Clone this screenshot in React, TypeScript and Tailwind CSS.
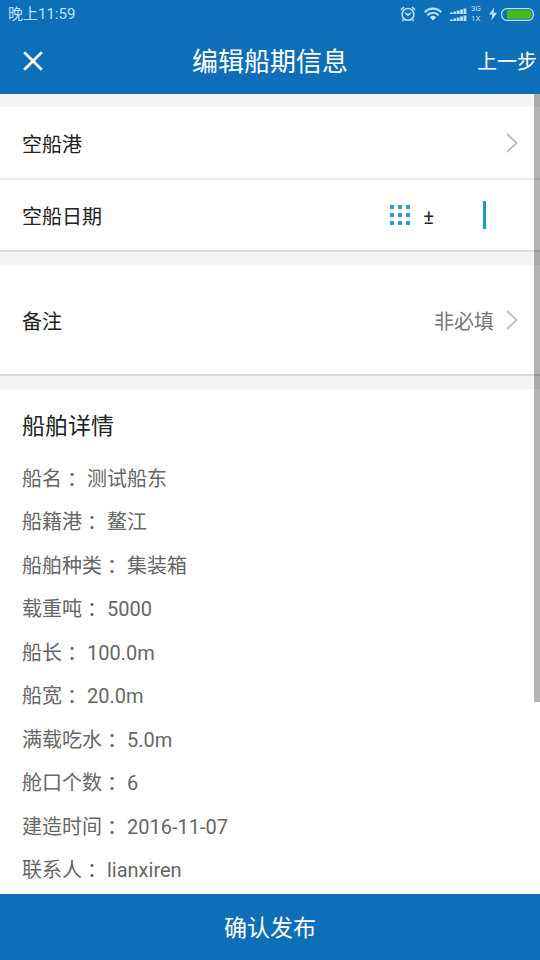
// Edit screen for a ship schedule: port, empty date, remark and ship details.

const SHIP_DETAILS = [
  { label: "船名", value: "测试船东" },
  { label: "船籍港", value: "鳌江" },
  { label: "船舶种类", value: "集装箱" },
  { label: "载重吨", value: "5000" },
  { label: "船长", value: "100.0m" },
  { label: "船宽", value: "20.0m" },
  { label: "满载吃水", value: "5.0m" },
  { label: "舱口个数", value: "6" },
  { label: "建造时间", value: "2016-11-07" },
  { label: "联系人", value: "lianxiren" },
];

export default function App() {
  return (
    <div
      lang="zh-CN"
      className="flex min-h-screen flex-col bg-[#f4f4f4] font-['Roboto','Noto_Sans_CJK_SC',sans-serif] text-xl text-[#222222]"
    >
      <header className="bg-[#0f6eb8] text-white">
        <StatusBar />
        <div className="grid h-[66px] grid-cols-[1fr_auto_1fr] items-center px-[3px]">
          <button type="button" aria-label="关闭" className="justify-self-start py-1 pr-1 pl-5">
            <svg viewBox="0 0 20 20" className="size-5" fill="none" stroke="currentColor" strokeWidth="2.7">
              <path d="M1.2 1.2 18.8 18.8M18.8 1.2 1.2 18.8" />
            </svg>
          </button>
          <h1 className="pt-0.5 text-[26px] leading-8">编辑船期信息</h1>
          <button type="button" className="justify-self-end pt-0.5">
            上一步
          </button>
        </div>
      </header>

      <main className="relative flex flex-1 flex-col gap-[13px] pt-[13px]">
        <section className="border-b-2 border-[#dedede] bg-white">
          <button
            type="button"
            className="flex h-[73px] w-full items-center justify-between border-b-2 border-[#e8e8e8] px-[22px] text-left"
          >
            <span className="pt-1">空船港</span>
            <Chevron />
          </button>
          <div className="flex h-[70px] items-center pr-[54px] pl-[22px]">
            <label htmlFor="empty-date" className="flex-1 pt-1">
              空船日期
            </label>
            <GridIcon />
            <span className="mx-3 pt-1">±</span>
            <input
              id="empty-date"
              type="text"
              inputMode="numeric"
              className="h-7 w-10 border-r-[3px] border-[#1c9aca] bg-transparent pr-1 text-right outline-none"
            />
          </div>
        </section>

        <button
          type="button"
          className="flex h-[111px] w-full items-center border-b-2 border-[#d8d8d8] bg-white px-[22px] text-left"
        >
          <span className="flex-1 pt-1">备注</span>
          <span className="mr-3 pt-1 text-[#757575]">非必填</span>
          <Chevron />
        </button>

        <section className="flex flex-1 flex-col bg-white px-[22px] pt-5 pb-2">
          <h2 className="pt-0.5 text-[23px] leading-8">船舶详情</h2>
          <ul className="mt-5 flex flex-1 flex-col justify-between gap-2 text-[#666666]">
            {SHIP_DETAILS.map((item) => (
              <li key={item.label} className="leading-8">
                {item.label} ：{item.value}
              </li>
            ))}
          </ul>
        </section>

        {/* Scroll position */}
        <div className="absolute top-0 right-0 h-[76%] w-[6px] bg-black/30" />
      </main>

      <footer>
        <button type="button" className="block h-[66px] w-full bg-[#0f6eb8] pt-1 text-[23px] text-white">
          确认发布
        </button>
      </footer>
    </div>
  );
}

function StatusBar() {
  return (
    <div className="flex h-7 items-center justify-between pr-[6px] pl-2 text-[15px] text-[#b9e2fb]">
      <span>晚上11:59</span>
      <div className="flex items-center">
        {/* Alarm */}
        <svg viewBox="0 0 16 16" className="mr-2 size-4" fill="none" stroke="currentColor" strokeWidth="1.6">
          <circle cx="8" cy="8.4" r="5.9" />
          <path d="M5.2 6.8 8 9.2l2.8-2.4M1 3.8 4 1.2M15 3.8 12 1.2M3.6 13.2 2.4 15M12.4 13.2l1.2 1.8" />
        </svg>
        {/* Wi-Fi */}
        <svg viewBox="0 0 18 14" className="mr-2 h-[14px] w-[18px]" fill="none" stroke="currentColor" strokeWidth="2.1">
          <path d="M0.8 5.2C5.2 0.4 12.8 0.4 17.2 5.2M3.4 8.2C6.4 4.9 11.6 4.9 14.6 8.2" />
          <path d="M5.8 10.2c1.9-1.8 4.5-1.8 6.4 0L9 13.6z" fill="currentColor" stroke="none" />
        </svg>
        <SignalIcon />
        <span className="mr-2 ml-1 flex flex-col text-[8px] leading-[10px]">
          <span>3G</span>
          <span>1X</span>
        </span>
        {/* Charging battery */}
        <svg viewBox="0 0 8 14" className="mr-1 h-[14px] w-2" fill="currentColor">
          <path d="M5.2 0.4 0 7.6h3.2L2.4 13.6 8 5.8H4.6z" />
        </svg>
        <svg viewBox="0 0 33 13" className="h-[13px] w-[33px]">
          <rect x="0.7" y="0.7" width="31.6" height="11.6" rx="5" fill="none" stroke="#b9e2fb" strokeWidth="1.3" />
          <path d="M6 2.2h21.5a3 3 0 0 1 3 3v2.6a3 3 0 0 1-3 3H6z" fill="#45bd12" />
        </svg>
      </div>
    </div>
  );
}

function SignalIcon() {
  return (
    <svg viewBox="0 0 17 13" className="h-[13px] w-[17px]" fill="currentColor">
      <path d="M0 4.4h2.8V6H0zM3.4 3.6h2.8V6H3.4zM6.8 2.6h2.8V6H6.8zM10.2 1.6H13V6h-2.8zM13.6 0.6h2.8V6h-2.8z" />
      <path d="M0 11.4h2.8V13H0zM3.4 10.6h2.8V13H3.4zM6.8 9.6h2.8V13H6.8zM10.2 8.6H13V13h-2.8zM13.6 7.6h2.8V13h-2.8z" />
    </svg>
  );
}

function Chevron() {
  return (
    <svg viewBox="0 0 12 20" className="h-5 w-3" fill="none" stroke="#bdbdbd" strokeWidth="1.8" aria-hidden="true">
      <path d="M1 1 10.6 10 1 19" />
    </svg>
  );
}

function GridIcon() {
  return (
    <svg viewBox="0 0 22 22" className="size-[22px]" fill="#2a9ad0" aria-hidden="true">
      <path d="M1 1h4v4H1zM9 1h4v4H9zM17 1h4v4h-4zM1 9h4v4H1zM9 9h4v4H9zM17 9h4v4h-4zM1 17h4v4H1zM9 17h4v4H9zM17 17h4v4h-4z" />
    </svg>
  );
}
